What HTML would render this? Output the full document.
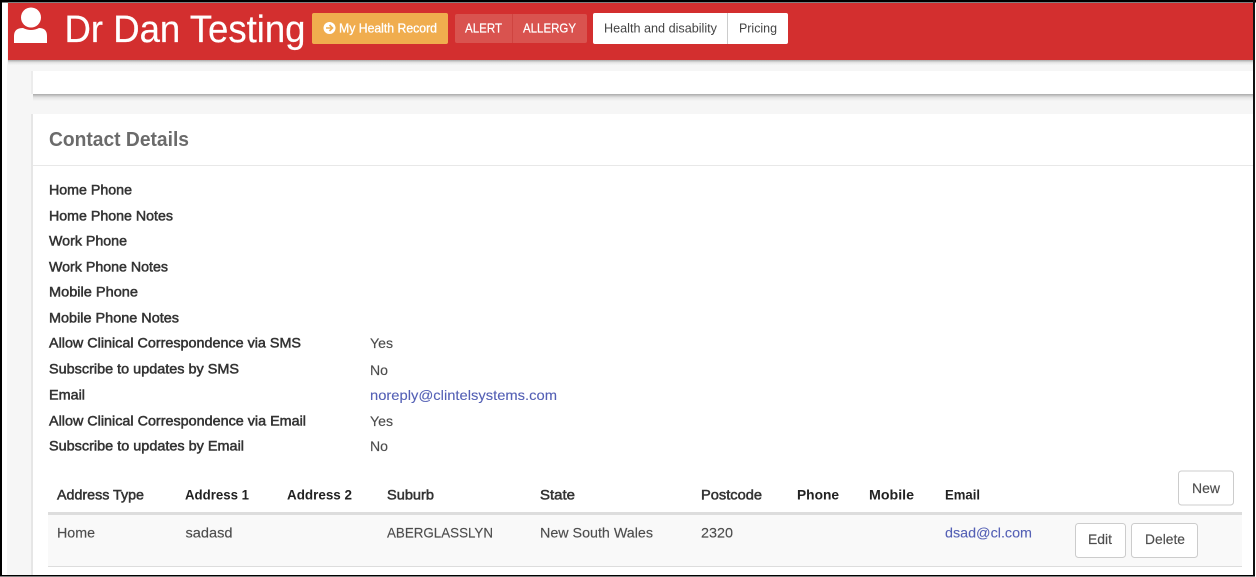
<!DOCTYPE html>
<html><head><meta charset="utf-8"><style>
html,body{margin:0;padding:0;background:#fff}
svg{display:block}
text{font-family:"Liberation Sans",sans-serif;font-size:14px;filter:blur(.3px)}
.b{font-weight:bold;fill:#222}
.l{fill:#333;stroke:#333;stroke-width:.5px}
.v{fill:#4d4d4d;stroke:#4d4d4d;stroke-width:.15px}
.a{fill:#5460b5;stroke:#5460b5;stroke-width:.1px}
</style></head><body>
<svg width="1256" height="577" viewBox="0 0 1256 577" xmlns="http://www.w3.org/2000/svg">
<defs>
<linearGradient id="s1" x1="0" y1="0" x2="0" y2="1"><stop offset="0" stop-color="#aaa"/><stop offset=".5" stop-color="#e4e4e4"/><stop offset="1" stop-color="#f5f5f5"/></linearGradient>
</defs>
<rect width="1256" height="577" fill="#fff"/>
<rect x="7" y="3" width="1246" height="572" fill="#f6f6f6"/>
<!-- card 1 -->
<rect x="33" y="71" width="1220" height="23" fill="#fff"/>
<rect x="33" y="94" width="1220" height="7" fill="url(#s1)"/>
<rect x="31" y="71" width="2" height="23" fill="#ececec"/>
<!-- card 2 -->
<rect x="33" y="114" width="1220" height="461" fill="#fff"/>
<rect x="31" y="114" width="2" height="461" fill="#e6e6e6"/>
<rect x="33" y="165" width="1220" height="1" fill="#e8e8e8"/>
<!-- header -->
<rect x="8" y="60" width="1245" height="5" fill="url(#s1)"/>
<rect x="8" y="3" width="1245" height="57" fill="#d32f2f"/>
<!-- person icon -->
<circle cx="31" cy="17.500" r="10" fill="#fff"/>
<path d="M14 43V36Q14 28 23 28Q31 32 39 28Q47 28 47 36V43Z" fill="#fff"/>
<text x="64.500" y="42" style="font-size:38px;stroke:#fff;stroke-width:.2px" fill="#fff" textLength="241" lengthAdjust="spacingAndGlyphs">Dr Dan Testing</text>
<!-- health record -->
<rect x="312" y="13" width="136" height="31" rx="2" fill="#f0ad4e"/>
<circle cx="329.500" cy="28" r="6" fill="#fff"/>
<path d="M326 28H332M329.500 25L332.500 28L329.500 31" stroke="#f0ad4e" stroke-width="1.600" fill="none"/>
<text x="339" y="32.500" style="font-size:13px;stroke:#fff;stroke-width:.3px" fill="#fff" textLength="98" lengthAdjust="spacingAndGlyphs">My Health Record</text>
<!-- alert -->
<rect x="455" y="14" width="132" height="29" rx="2" fill="#d9534f"/>
<rect x="512" y="14" width="1" height="29" fill="#cf4440"/>
<text x="465" y="32.500" style="font-size:13px;stroke:#fff;stroke-width:.2px" fill="#fff" textLength="37" lengthAdjust="spacingAndGlyphs">ALERT</text>
<text x="523" y="32.500" style="font-size:13px;stroke:#fff;stroke-width:.2px" fill="#fff" textLength="53" lengthAdjust="spacingAndGlyphs">ALLERGY</text>
<!-- white group -->
<rect x="593" y="13" width="195" height="31" rx="2" fill="#fff"/>
<rect x="727" y="13" width="1" height="31" fill="#ccc"/>
<text x="604" y="32.500" style="font-size:13px" fill="#444" textLength="113" lengthAdjust="spacingAndGlyphs">Health and disability</text>
<text x="739" y="32.500" style="font-size:13px" fill="#444" textLength="38" lengthAdjust="spacingAndGlyphs">Pricing</text>
<!-- title -->
<text x="49" y="146" style="font-size:20px;font-weight:bold" fill="#6b6b6b" textLength="140" lengthAdjust="spacingAndGlyphs">Contact Details</text>
<!-- labels -->
<text class="l" x="49" y="194.500" textLength="83" lengthAdjust="spacingAndGlyphs">Home Phone</text>
<text class="l" x="49" y="220.500" textLength="124" lengthAdjust="spacingAndGlyphs">Home Phone Notes</text>
<text class="l" x="49" y="245.500" textLength="78" lengthAdjust="spacingAndGlyphs">Work Phone</text>
<text class="l" x="49" y="271.500" textLength="119" lengthAdjust="spacingAndGlyphs">Work Phone Notes</text>
<text class="l" x="49" y="296.500" textLength="89" lengthAdjust="spacingAndGlyphs">Mobile Phone</text>
<text class="l" x="49" y="322.500" textLength="130" lengthAdjust="spacingAndGlyphs">Mobile Phone Notes</text>
<text class="l" x="49" y="347.500" textLength="252" lengthAdjust="spacingAndGlyphs">Allow Clinical Correspondence via SMS</text>
<text class="l" x="49" y="373.500" textLength="190" lengthAdjust="spacingAndGlyphs">Subscribe to updates by SMS</text>
<text class="l" x="49" y="399.500" textLength="36" lengthAdjust="spacingAndGlyphs">Email</text>
<text class="l" x="49" y="425.500" textLength="257" lengthAdjust="spacingAndGlyphs">Allow Clinical Correspondence via Email</text>
<text class="l" x="49" y="450.500" textLength="195" lengthAdjust="spacingAndGlyphs">Subscribe to updates by Email</text>
<!-- values -->
<text class="v" x="370" y="348" textLength="23" lengthAdjust="spacingAndGlyphs">Yes</text>
<text class="v" x="370" y="375" textLength="18" lengthAdjust="spacingAndGlyphs">No</text>
<text class="a" x="370" y="400" textLength="187" lengthAdjust="spacingAndGlyphs">noreply@clintelsystems.com</text>
<text class="v" x="370" y="426" textLength="23" lengthAdjust="spacingAndGlyphs">Yes</text>
<text class="v" x="370" y="451" textLength="18" lengthAdjust="spacingAndGlyphs">No</text>
<!-- table head -->
<text class="l" x="57" y="499.500" textLength="87" lengthAdjust="spacingAndGlyphs">Address Type</text>
<text class="b" x="185" y="499.500" textLength="64" lengthAdjust="spacingAndGlyphs">Address 1</text>
<text class="b" x="287" y="499.500" textLength="65" lengthAdjust="spacingAndGlyphs">Address 2</text>
<text class="l" x="387" y="499.500" textLength="47" lengthAdjust="spacingAndGlyphs">Suburb</text>
<text class="l" x="540" y="499.500" textLength="35" lengthAdjust="spacingAndGlyphs">State</text>
<text class="l" x="701" y="499.500" textLength="61" lengthAdjust="spacingAndGlyphs">Postcode</text>
<text class="b" x="797" y="499.500" textLength="42" lengthAdjust="spacingAndGlyphs">Phone</text>
<text class="b" x="869" y="499.500" textLength="45" lengthAdjust="spacingAndGlyphs">Mobile</text>
<text class="b" x="945" y="499.500" textLength="35" lengthAdjust="spacingAndGlyphs">Email</text>
<!-- table rows -->
<rect x="48" y="515" width="1194" height="52" fill="#f9f9f9"/>
<rect x="48" y="512" width="1194" height="3" fill="#ddd"/>
<rect x="48" y="566" width="1194" height="1" fill="#ddd"/>
<text class="v" x="57" y="537.500" textLength="38" lengthAdjust="spacingAndGlyphs">Home</text>
<text class="v" x="185.500" y="537.500" textLength="47" lengthAdjust="spacingAndGlyphs">sadasd</text>
<text class="v" x="387" y="537.500" textLength="106" lengthAdjust="spacingAndGlyphs">ABERGLASSLYN</text>
<text class="v" x="540" y="537.500" textLength="113" lengthAdjust="spacingAndGlyphs">New South Wales</text>
<text class="v" x="701" y="537.500" textLength="32" lengthAdjust="spacingAndGlyphs">2320</text>
<text class="a" x="945" y="537.500" textLength="87" lengthAdjust="spacingAndGlyphs">dsad@cl.com</text>
<!-- buttons -->
<rect x="1178.500" y="471" width="55" height="34" rx="3" fill="#fff" stroke="#ccc"/>
<text class="v" x="1192" y="493" textLength="28" lengthAdjust="spacingAndGlyphs">New</text>
<rect x="1075.500" y="523.500" width="50" height="34" rx="3" fill="#fff" stroke="#ccc"/>
<text class="v" x="1088" y="544" textLength="24" lengthAdjust="spacingAndGlyphs">Edit</text>
<rect x="1131.500" y="523.500" width="66" height="34" rx="3" fill="#fff" stroke="#ccc"/>
<text class="v" x="1145" y="544" textLength="40" lengthAdjust="spacingAndGlyphs">Delete</text>
<!-- outer frame -->
<rect x="0" y="0" width="1256" height="2.500" fill="#000"/>
<rect x="0" y="0" width="2" height="576" fill="#000"/>
<rect x="1253" y="0" width="2" height="576" fill="#111"/>
<rect x="0" y="575" width="1255" height="1.500" fill="#000"/>
</svg>
</body></html>
